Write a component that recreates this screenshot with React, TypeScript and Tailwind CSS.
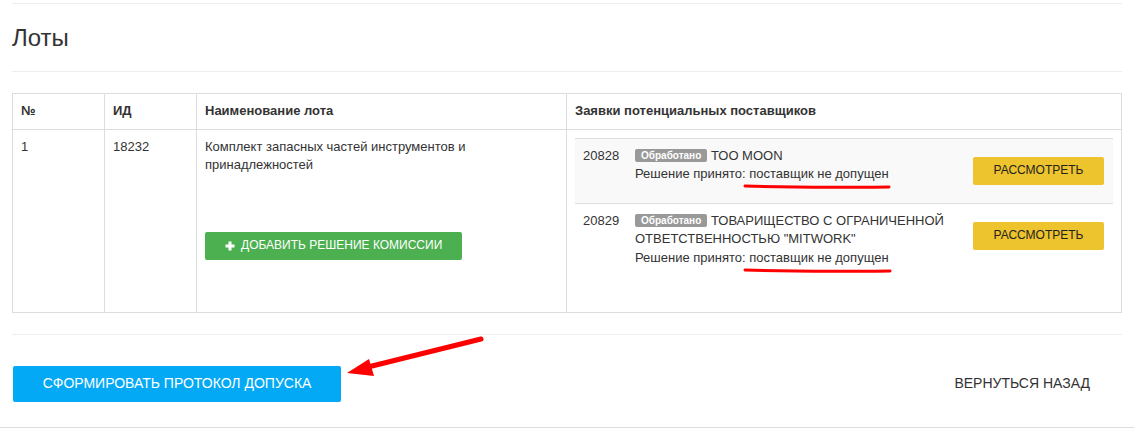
import React from "react";

type Bid = {
  id: string;
  company: string;
  striped: boolean;
};

const bids: Bid[] = [
  { id: "20828", company: "ТОО MOON", striped: true },
  { id: "20829", company: 'ТОВАРИЩЕСТВО С ОГРАНИЧЕННОЙ ОТВЕТСТВЕННОСТЬЮ "MITWORK"', striped: false },
];

function PlusIcon() {
  return (
    <svg width="10" height="10" viewBox="0 0 10 10" className="shrink-0">
      <rect x="3.5" y="0.5" width="3" height="9" fill="currentColor" />
      <rect x="0.5" y="3.5" width="9" height="3" fill="currentColor" />
    </svg>
  );
}

function BidRow({ bid, first }: { bid: Bid; first: boolean }) {
  return (
    <tr className={`${bid.striped ? "bg-[#f9f9f9]" : ""} ${first ? "" : "border-t border-[#ddd]"}`}>
      <td className="p-2 align-top">{bid.id}</td>
      <td className="p-2 align-top">
        <span className="inline-block bg-[#999] text-white font-bold text-[10px] leading-none px-[6px] pt-[2px] pb-[1px] rounded-[2px] align-[1px]">
          Обработано
        </span>{" "}
        {bid.company}
        <div>Решение принято: поставщик не допущен</div>
      </td>
      <td className="py-2 pl-2 pr-[9px] align-top">
        <button className="block ml-auto my-[10px] w-[131px] h-[28px] bg-[#eec42e] text-[#222] text-[12px] rounded-[2px]">
          РАССМОТРЕТЬ
        </button>
      </td>
    </tr>
  );
}

export default function App() {
  return (
    <div className="relative w-[1134px] h-[428px] overflow-hidden bg-white font-['Liberation_Sans',Arial,sans-serif] text-[13px] leading-[1.42857] text-[#333]">
      <div className="px-3">
        <div className="mt-[3px] h-px bg-[#eee]" />
        <h3 className="mt-[21px] text-[24px] leading-[26px] font-normal">Лоты</h3>
        <div className="mt-[20px] h-px bg-[#eee]" />

        <table className="mt-[21px] w-full table-fixed border-collapse border border-[#ddd]">
          <colgroup>
            <col className="w-[92px]" />
            <col className="w-[92px]" />
            <col className="w-[370px]" />
            <col />
          </colgroup>
          <thead>
            <tr>
              <th className="border border-[#ddd] p-2 text-left font-bold">№</th>
              <th className="border border-[#ddd] p-2 text-left font-bold">ИД</th>
              <th className="border border-[#ddd] p-2 text-left font-bold">Наименование лота</th>
              <th className="border border-[#ddd] p-2 text-left font-bold">Заявки потенциальных поставщиков</th>
            </tr>
          </thead>
          <tbody>
            <tr>
              <td className="border border-[#ddd] p-2 align-top">1</td>
              <td className="border border-[#ddd] p-2 align-top">18232</td>
              <td className="border border-[#ddd] p-2 align-top">
                <div className="pr-8">Комплект запасных частей инструментов и принадлежностей</div>
                <button className="mt-[57px] mb-[44px] flex items-center gap-[6px] w-[257px] h-[28px] pl-[20px] bg-[#4caf50] text-white text-[12px] rounded-[2px]">
                  <PlusIcon />
                  ДОБАВИТЬ РЕШЕНИЕ КОМИССИИ
                </button>
              </td>
              <td className="border border-[#ddd] p-2 align-top">
                <table className="w-full table-fixed border-collapse border-t border-[#ddd]">
                  <colgroup>
                    <col className="w-[52px]" />
                    <col />
                    <col className="w-[148px]" />
                  </colgroup>
                  <tbody>
                    {bids.map((b, i) => (
                      <BidRow key={b.id} bid={b} first={i === 0} />
                    ))}
                  </tbody>
                </table>
              </td>
            </tr>
          </tbody>
        </table>

        <div className="mt-[21px] h-px bg-[#eee]" />
        <div className="mt-[31px] flex items-center justify-between">
          <button className="ml-px w-[328px] h-[36px] bg-[#03a9f4] text-white text-[14px] rounded-[2px]">
            СФОРМИРОВАТЬ ПРОТОКОЛ ДОПУСКА
          </button>
          <button className="h-[36px] pl-8 pr-8 text-[14px] text-[#333]">ВЕРНУТЬСЯ НАЗАД</button>
        </div>
      </div>
      <div className="mt-[25px] h-px bg-[#ddd]" />

      <svg className="pointer-events-none absolute left-0 top-0" width="1134" height="428">
        <path d="M745 186 Q 800 188 889 187" stroke="#f00" strokeWidth="3" fill="none" strokeLinecap="round" />
        <path d="M745 270 Q 800 272 890 271" stroke="#f00" strokeWidth="3" fill="none" strokeLinecap="round" />
        <path d="M481 339 L 368 367" stroke="#f00" strokeWidth="5" fill="none" strokeLinecap="round" />
        <polygon points="347,373 369,359 374,376" fill="#f00" />
      </svg>
    </div>
  );
}
